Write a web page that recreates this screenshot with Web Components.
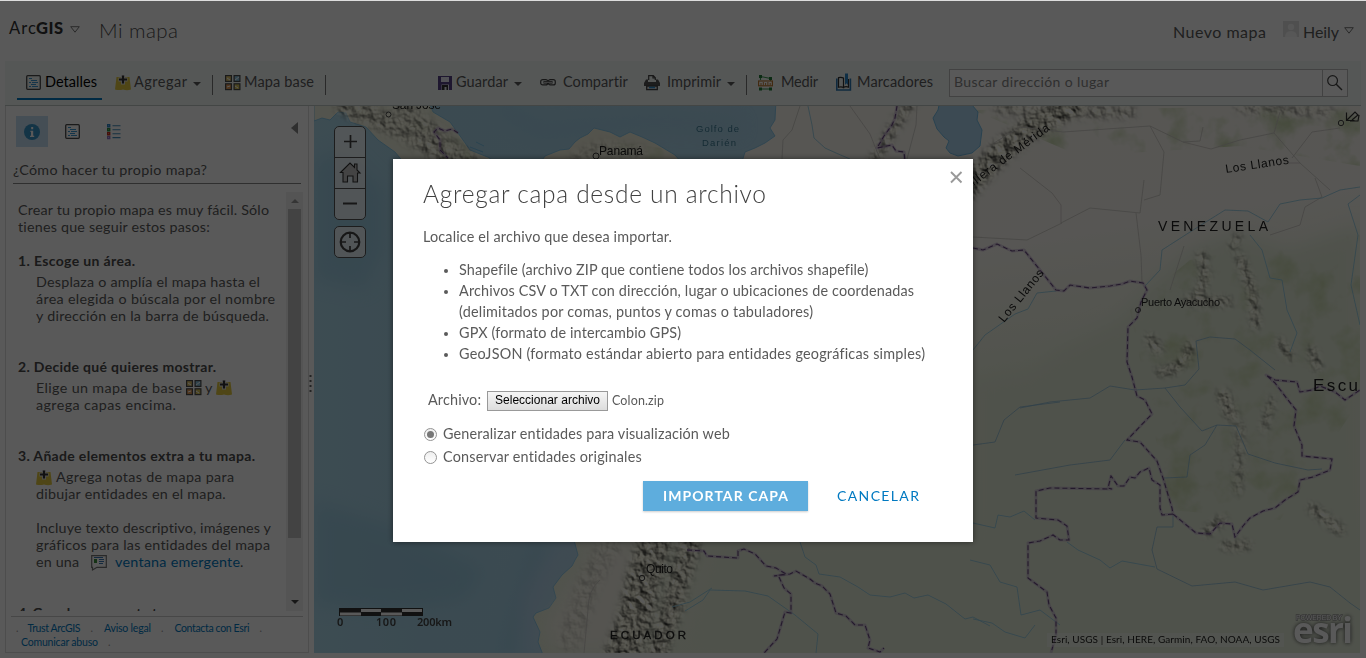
<!DOCTYPE html>
<html lang="es">
<head>
<meta charset="utf-8">
<title>Mi mapa</title>
<style>
html,body{margin:0;height:100%;overflow:hidden;background:#fff}
body{font-family:Lato,"Open Sans",sans-serif;font-size:14px;color:#5a5a5a}
</style>
</head>
<body>
<map-app></map-app>
<script>
const define=(name,css,html,after)=>{
  const tpl=document.createElement('template');
  tpl.innerHTML=`<style>${css}</style>${html}`;
  customElements.define(name,class extends HTMLElement{
    connectedCallback(){
      if(this.shadowRoot)return;
      this.attachShadow({mode:'open'}).append(tpl.content.cloneNode(true));
      if(after)after(this,this.shadowRoot);
    }
  });
};

/* One line of text tracked out to the width given in its w attribute */
define('fit-text',`:host{display:inline-block;white-space:nowrap}span{display:inline-block}`,
`<span><slot></slot></span>`,(el,root)=>{
  const s=root.querySelector('span'),w=+el.getAttribute('w');
  const n=el.textContent.length;
  const natural=s.getBoundingClientRect().width;
  if(n>1)s.style.letterSpacing=((w-natural)/(n-1)).toFixed(3)+'px';
  el.style.width=w+'px';
});

const ICONS={
details:`<rect x=".7" y=".7" width="13.6" height="13.6" rx="1" fill="none" stroke="#4c4c4c" stroke-width="1.3"/><path d="M3 3.5h3M5 5.5h6M3 7.5h2M6 7.5h6M5 9.5h5M3 11.5h2M6 11.5h6" stroke="#3b98d4" stroke-width="1.1"/>`,
add:`<path d="M1.500 2h13L16 14.500q-4 1.300-8 0-4 1.200-8 0z" fill="#e3c93f"/><path d="M8 0v9.500M3.500 4.500h9" stroke="#e9e9e9" stroke-width="4"/><path d="M8 .5v8M4 4.500h8" stroke="#333" stroke-width="2.200"/>`,
basemap:`<g stroke="#4c4c4c" stroke-width="1.2"><rect x=".6" y=".6" width="5.8" height="5.8" fill="#e1c56c"/><rect x="9.1" y=".6" width="5.8" height="5.8" fill="#8bc5df"/><rect x=".6" y="8.8" width="5.8" height="5.8" fill="#e69a55"/><rect x="9.1" y="8.8" width="5.8" height="5.8" fill="#d8c25b"/></g><path d="M10 5l4-3M2 12l3-1M2 3l3 2M10 11l3 2" stroke="#fff" stroke-width="1"/>`,
save:`<path d="M0 1h14v14H0z" fill="#564287"/><path d="M3 2h8v5H3zM3.500 9.500h7.500V15H3.500z" fill="#e9e9f3"/><path d="M4 10h6v5H8.500v-3h-2v3H4z" fill="#333"/>`,
link:`<g fill="none" stroke="#444" stroke-width="1.2"><rect x=".7" y="4.700" width="7" height="5.200" rx="2"/><rect x="8.300" y="4.700" width="7" height="5.200" rx="2"/><path d="M3.500 7.300h9" stroke-width="2.600"/><path d="M4 7.300h8" stroke="#ddd" stroke-width=".9"/></g>`,
print:`<path d="M4.700 5V.7h4.600l2 2V5M9 .7V3h2.300" fill="none" stroke="#444" stroke-width="1.2"/><path d="M2 4.500h2V7h8V4.500h2L16 8v3H0V8z" fill="#555"/><path d="M2.700 11v3.700h10.600V11z" fill="#ddd" stroke="#444" stroke-width="1.300"/><path d="M5 12.500h6" stroke="#2f8fd0" stroke-width="1.600"/>`,
measure:`<path d="M2.500 1.500l10 2M2.500 14h10M2.500 2v3M12.500 3v3" stroke="#3c9a52" stroke-width="1.1"/><rect x=".6" y="6" width="13.8" height="4.8" fill="#fff" stroke="#bd7a32" stroke-width="1.2"/><path d="M3 8v2.500M5.300 7v3.500M7.600 8v2.500M9.900 7v3.500M12.200 8v2.500" stroke="#bd7a32"/><path d="M1 0h3v3H1zM11 2h3v3h-3zM1 12.500h3v3H1zM11 12.500h3v3h-3z" fill="#247c3b"/>`,
bookmark:`<path d="M.8 3.500V15h13.600V3.500" fill="none" stroke="#2d78b4" stroke-width="1.600"/><path d="M2.500 2.600q3-.8 5 .5v9.400q-2-1.200-5-.3zM7.500 3v9.400q2-1.200 5-.3V4" fill="none" stroke="#333" stroke-width="1.200"/><path d="M9 -1.500h3v11.500l-1.500-1.700L9 10z" fill="#2d86c8"/>`,
info:`<circle cx="8" cy="8" r="8" fill="#3795c8"/><path d="M6.400 6.700h2.800v5h1v1.200H6V11.700h1V8h-.6zM7.200 3h2v2.200h-2z" fill="#fff"/>`,
legend:`<g fill="none" stroke-width="1.400"><path d="M.7.7h2v2h-2z" stroke="#2d86c8"/><path d="M.7 4.700h2v2h-2z" stroke="#2e8c46"/><path d="M.7 8.700h2v2h-2z" stroke="#c83020"/><path d="M.7 12.600h2v2h-2z" stroke="#9072c2"/></g><path d="M5.500 1.700h8M5.500 5.700h8M5.500 9.700h8M5.500 13.600h8" stroke="#438cba" stroke-width="1.100"/>`,
popup:`<path d="M.7.7h14.600v11.600H6L1.500 15v-2.700H.7z" fill="#fff" stroke="#777" stroke-width="1.200"/><path d="M3 4h3v4H3z" fill="#3c8f3c"/><path d="M8 4.500h5M8 6.500h5M8 8.500h4M3 2.500h9" stroke="#3d78b4"/>`,
search:`<circle cx="5.600" cy="5.600" r="4.900" fill="none" stroke="#444" stroke-width="1.200"/><path d="M9 9l6 6" stroke="#444" stroke-width="1.400"/>`,
open:`<path d="M.7.7h8.600L5 6.200z" fill="none" stroke="#777" stroke-width="1"/>`,
caret:`<path d="M0 0h8L4 4z" fill="#5a5a5a"/>`,
user:`<path d="M0 0h16v16H0z" fill="#e2e2e2"/><circle cx="8" cy="6" r="3.200" fill="#f8f8f8"/><path d="M2 16q0-6 6-6t6 6z" fill="#f8f8f8"/>`,
close:`<path d="M1 1l10.500 10.500M11.500 1L1 11.500" stroke="#999" stroke-width="1.900"/>`,
plus:`<path d="M7.500 1v13M1 7.500h13" stroke="#444" stroke-width="1.700"/>`,
minus:`<path d="M1 7.500h14" stroke="#444" stroke-width="2"/>`,
home:`<path d="M1.500 10.500L11 1l4.500 4.500V2H18v6l3 3h-2.500v9H14v-6H8.500v6H4v-9.500z" fill="#c4c4c4" stroke="#333" stroke-width="1.100"/>`,
locate:`<circle cx="11" cy="11" r="9.300" fill="none" stroke="#444" stroke-width="2.200"/><path d="M11 1v6M11 15v6M1 11h6M15 11h6" stroke="#444" stroke-width="1.700"/>`
};
define('ui-icon',`:host{display:block;flex:none}svg{display:block;overflow:visible}`,`<svg></svg>`,(el,root)=>{
  const s=root.querySelector('svg');
  s.setAttribute('width',el.getAttribute('w')||16);
  s.setAttribute('height',el.getAttribute('h')||16);
  s.innerHTML=ICONS[el.getAttribute('name')];
});

define('app-header',`
:host{display:flex;height:61px;border-top:1px solid #ddd;box-sizing:border-box;padding:0 13px 0 9px;line-height:20px;align-items:flex-start}
.brand{display:flex;font-size:16.500px;color:#333;margin-top:17px;width:54px}
.brand b{font-weight:900}
.title{font-size:20.500px;font-weight:300;margin:19px auto 0 19px;color:#4c4c4c}
.r{font-size:16px;margin-top:21px}`,
`<div class="brand"><fit-text w="27">Arc</fit-text><b><fit-text w="27">GIS</fit-text></b></div><ui-icon name="open" w="10" h="8" style="margin:25px 0 0 7px"></ui-icon>
<div class="title"><fit-text w="79">Mi mapa</fit-text></div>
<fit-text class="r" w="93">Nuevo mapa</fit-text><ui-icon name="user" style="margin:20px 4px 0 17px"></ui-icon>
<fit-text class="r" w="36">Heily</fit-text><ui-icon name="open" w="9" h="8" style="margin:26px 0 0 5px"></ui-icon>`);

define('tool-item',`:host{display:flex;align-items:flex-start;line-height:20px;box-sizing:border-box;height:39px;font-size:14.500px;margin-top:11px}
:host([active]){border-bottom:2px solid #0079c1;padding:0 5px 0 9px;color:#000;height:28px}
ui-icon{margin-top:3px;margin-right:var(--g,3px)}
ui-icon.c{margin:10px 0 0 6px}`,``,(el,root)=>{
  root.innerHTML+=`<ui-icon name="${el.getAttribute('icon')}"></ui-icon><fit-text w="${el.getAttribute('w')}">${el.getAttribute('label')}</fit-text>`+(el.hasAttribute('menu')?`<ui-icon class="c" name="caret" w="8" h="4"></ui-icon>`:'');
});

define('map-toolbar',`
:host{display:flex;margin:0 5px;height:45px;box-sizing:border-box;background:#f3f9f7;border-bottom:1px solid #c0c8c6;padding-left:12px;align-items:flex-start}
i{width:1px;height:20px;background:#777;margin-top:14px}
.search{display:flex;box-sizing:border-box;height:28px;width:399px;border:1px solid #bcbcbc;background:#fff;margin-top:8px;line-height:24px;font-size:14px;color:#888}
.search span{flex:1;padding-left:4px}
.search div{width:25px;border-left:1px solid #bcbcbc;padding:5px 0 0 4px;box-sizing:border-box}`,
`<tool-item active icon="details" w="52" label="Detalles" style="width:85px;flex:none"></tool-item>
<tool-item icon="add" w="53" label="Agregar" menu style="margin-left:13px"></tool-item>
<i style="margin-left:11px"></i>
<tool-item icon="basemap" w="70" label="Mapa base" style="margin-left:12px"></tool-item>
<i style="margin-left:11px"></i>
<tool-item icon="save" w="52" label="Guardar" menu style="margin-left:112px;--g:2px"></tool-item>
<tool-item icon="link" w="65" label="Compartir" style="margin-left:18px;--g:7px"></tool-item>
<tool-item icon="print" w="54" label="Imprimir" menu style="margin-left:16px;--g:7px"></tool-item>
<i style="margin-left:11px"></i>
<tool-item icon="measure" w="37" label="Medir" style="margin-left:11px;--g:7px"></tool-item>
<tool-item icon="bookmark" w="76" label="Marcadores" style="margin-left:18px;--g:5px"></tool-item>
<div class="search" style="margin-left:16px"><span><fit-text w="155">Buscar dirección o lugar</fit-text></span><div><ui-icon name="search"></ui-icon></div></div>`);

define('help-steps',`
:host{display:block;box-sizing:border-box;padding:9px 0 0 7px;line-height:17px;font-size:14.300px;width:275px}
p{margin:0 0 17px}p fit-text,.s fit-text.l{display:block}
b{display:block;margin-bottom:4px;height:17px;color:#4c4c4c;font-size:14px}
.s{padding-left:18px;margin-bottom:34px}
.row{display:flex;height:17px;align-items:flex-start}
a{color:#0079c1}`,
`<p><fit-text w="251">Crear tu propio mapa es muy fácil. Sólo</fit-text><fit-text w="192">tienes que seguir estos pasos:</fit-text></p>
<b><fit-text w="117">1. Escoge un área.</fit-text></b>
<div class="s"><fit-text class="l" w="224">Desplaza o amplía el mapa hasta el</fit-text><fit-text class="l" w="239">área elegida o búscala por el nombre</fit-text><fit-text class="l" w="233">y dirección en la barra de búsqueda.</fit-text></div>
<b><fit-text w="198">2. Decide qué quieres mostrar.</fit-text></b>
<div class="s"><div class="row"><fit-text w="146">Elige un mapa de base</fit-text><ui-icon name="basemap" style="margin:1px 3px 0 4px"></ui-icon><fit-text w="7">y</fit-text><ui-icon name="add" style="margin:1px 0 0 4px"></ui-icon></div><fit-text class="l" w="140">agrega capas encima.</fit-text></div>
<b><fit-text w="237">3. Añade elementos extra a tu mapa.</fit-text></b>
<div class="s"><div class="row"><ui-icon name="add" style="margin:2px 4px 0 0"></ui-icon><fit-text w="178">Agrega notas de mapa para</fit-text></div><fit-text class="l" w="190">dibujar entidades en el mapa.</fit-text>
<fit-text class="l" w="235" style="margin-top:17px">Incluye texto descriptivo, imágenes y</fit-text><fit-text class="l" w="234">gráficos para las entidades del mapa</fit-text>
<div class="row"><fit-text w="43">en una</fit-text><ui-icon name="popup" style="margin:2px 8px 0 12px"></ui-icon><a><fit-text w="125">ventana emergente</fit-text></a>.</div></div>
<b><fit-text w="187">4. Guarda y comparte tu mapa.</fit-text></b>`);

define('side-panel',`
:host{display:block;box-sizing:border-box;width:304px;height:547px;border:solid #ddd;border-width:0 1px 1px;padding:10px 5px 0}
nav{display:flex;height:32px;padding-left:5px;align-items:flex-start}
nav div{background:#c5dff3;width:32px;height:31px;box-sizing:border-box;padding:8px}
h2{font:inherit;font-size:14.300px;line-height:18px;margin:13px 2px 0 2px;height:22px;border-bottom:1px solid #888}
.scroll{display:flex;height:419px;margin-top:8px;overflow:hidden}
help-steps{height:410px;flex:none}
.bar{width:17px;background:#f1f1f1;display:flex;flex-direction:column;align-items:center;flex:none}
.bar div{width:13px;height:329px;background:#c1c1c1;margin-top:6px;margin-bottom:62px;flex:none}
footer{border-top:1px solid #ccc;margin-top:5px;padding:4px 0 0 6px;font-size:10.500px;line-height:14px;color:#0079c1}
footer div{display:flex;gap:10px}u{text-decoration:none;color:#999}u:first-child{margin:0 -1px}fit-text+u{margin-right:1px}`,
`<nav><div><ui-icon name="info"></ui-icon></div><ui-icon name="details" w="15" h="15" style="margin:8px 0 0 17px"></ui-icon><ui-icon name="legend" style="margin:8px 0 0 27px"></ui-icon>
<svg width="7" height="12" style="margin:6px 0 0 168px"><path d="M7 0v12L0 6z" fill="#888"/></svg></nav>
<h2><fit-text w="194">¿Cómo hacer tu propio mapa?</fit-text></h2>
<div class="scroll"><help-steps></help-steps><div class="bar"><svg width="8" height="4" style="margin-top:7px;flex:none"><path d="M0 4h8L4 0z" fill="#999"/></svg><div></div><svg width="8" height="4" style="flex:none"><path d="M0 0h8L4 4z" fill="#444"/></svg></div></div>
<footer><div><u>.</u><fit-text w="53">Trust ArcGIS</fit-text><u>.</u><fit-text w="47">Aviso legal</fit-text><u>.</u><fit-text w="75">Contacta con Esri</fit-text><u>.</u></div><div style="padding-left:4px"><fit-text w="77">Comunicar abuso</fit-text><u>.</u></div></footer>`);

/* Topographic base map; the viewBox is in window coordinates */
const mountains=[
 ['M346 106L372 116 400 128 428 145 450 160',20,.7],['M400 106L440 138 475 168',16,.6],['M575 158L600 146 640 152',10,.4],
 ['M912 100L895 125 872 165',10,.8],['M1072 106L1030 128 1000 152 965 190',22,1],['M1000 108L1050 112 1130 112',12,.6],['M1240 108L1330 112',9,.6],
 ['M655 540L645 575 635 620 620 660',34,1],['M690 540L682 570 672 605 655 660',22,.9],['M610 545L590 580 570 640',22,.25],
 ['M1238 235L1233 248',6,.8],['M1202 255L1205 280 1198 295',8,.9],['M1240 258L1252 290 1256 325',8,.9],['M1188 300L1228 302',9,.8],['M1150 338L1158 350M1190 345Q1185 370 1160 372',9,.8],
 ['M1280 342L1290 357M1312 350L1317 367',8,.8],['M1223 395L1232 416',11,.9],['M1272 400L1264 428',7,.7],['M1240 425L1238 490',9,.5],['M1312 508L1340 530',9,.8],['M1206 532L1222 520M1225 546L1247 545',8,.9]
];
define('base-map',`:host{display:block;width:1046px;height:547px}svg{display:block}text{font-family:"Liberation Sans",Arial,sans-serif;fill:#222}`,
`<svg width="1046" height="547" viewBox="314 106 1046 547">
<defs>
<linearGradient id="land" x1="0" y1="0" x2=".25" y2="1"><stop offset="0" stop-color="#f8f6ed"/><stop offset=".38" stop-color="#f8f6ef"/><stop offset=".6" stop-color="#e9efdc"/><stop offset="1" stop-color="#e3ebd8"/></linearGradient>
<linearGradient id="sea" x1="0" y1="0" x2="1" y2="0"><stop offset="0" stop-color="#aedaec"/><stop offset=".1" stop-color="#a9d5e8"/><stop offset="1" stop-color="#b7d8ef"/></linearGradient>
<filter id="soft" x="-20%" y="-20%" width="140%" height="140%"><feGaussianBlur stdDeviation="9"/></filter>
<filter id="relief" filterUnits="userSpaceOnUse" x="314" y="96" width="1056" height="567" color-interpolation-filters="sRGB">
<feGaussianBlur in="SourceGraphic" stdDeviation="3.500" result="m"/>
<feTurbulence type="fractalNoise" baseFrequency=".12" numOctaves="3" seed="8"/>
<feDiffuseLighting surfaceScale="3.200" diffuseConstant="1.220" lighting-color="#e4e2d0"><feDistantLight azimuth="315" elevation="50"/></feDiffuseLighting>
<feComposite in2="m" operator="in"/></filter>
<filter id="wash" filterUnits="userSpaceOnUse" x="314" y="96" width="1056" height="567" color-interpolation-filters="sRGB">
<feTurbulence type="fractalNoise" baseFrequency=".03" numOctaves="4" seed="4"/>
<feColorMatrix values="0 0 0 0 .8  0 0 0 0 .85  0 0 0 0 .7  3 0 0 0 -1.500" result="n"/><feComposite in="n" in2="SourceAlpha" operator="in"/></filter>
</defs>
<path d="M314 106h1046v547H314z" fill="url(#sea)"/>
<g filter="url(#soft)" opacity=".5"><path d="M314 160l30-10 40 40v60l-20 40-50-10zM314 500l90 30 80 40-20 30-80 10-70-5z" fill="#91c3dc"/><path d="M540 540l-20 60-15 60" stroke="#86bcd8" stroke-width="8" fill="none"/><path d="M575 540l-42 60 3 60" stroke="#c9d7f2" stroke-width="17" fill="none"/><path d="M500 106l40 25 110-10 90 5" stroke="#98c8e3" stroke-width="12" fill="none"/></g>
<g stroke="#78bfe6" stroke-width=".8">
<path d="M314 100H428L433 112 450 122 463 140 470 150 490 158V170H410L395 152 378 140 366 127 350 122 346 113 338 112 330 120 322 118 314 121z" fill="#eef0de"/>
<path d="M535 170L545 156 560 150 569 149 575 142 580 138 588 134 594 128 610 132 620 137 630 132 642 137 655 143 675 155 688 170z" fill="#eeedda"/>
<path d="M776 100L775 120 770 128 775 136 765 143 755 148 745 152 738 175H760V540H574L578 555 575 560 572 566 562 575 553 587 556 598 549 608 536 613 533 617 540 632 538 642 545 660H1370V100z" fill="url(#land)"/></g>
<path d="M560 653L550 640 548 620 563 600 566 590 584 570 590 542H640L615 653z" fill="#f6f1e8" filter="url(#soft)" opacity=".8"/>
<path d="M973 380L1030 372 1060 350 1120 320 1145 290 1190 250 1235 232 1290 250 1360 225V653H690L710 540H973z" fill="#e3ebd8" filter="url(#soft)"/>
<path d="M428 106l35 36 10 18h-45l-45-25zM576 158l25-18 60 8 10 12zM973 110l387-4v60l-120-20-160 10zM1130 310l60-50 80-15 90-10v165l-80 120-110-10z" fill="#cfd8b3" filter="url(#wash)"/>
<g id="mountains" filter="url(#relief)" fill="none" stroke="#000" stroke-linecap="round" stroke-linejoin="round"></g>
<path d="M940 100L938 110 933 118 937 129 944 137 949 141 946 148 950 153 958 156 972 153 980 146 982 130 977 120 978 112 972 105 972 100z" fill="#abd4ee" stroke="#75bce4"/>
<path d="M470 147l13 5M476 142l8 4" stroke="#78bfe6"/>
<g fill="none" stroke="#c9c7c2" stroke-width=".8"><path d="M850 106L870 134 880 159M800 106L792 130 783 140 782 159M917 106L916 125 907 159M994 143L1020 127 1063 132 1150 126 1164 152 1160 195 1144 200M1020 168L1052 193 1061 205 1061 223 1090 208 1140 213 1144 180M973 237L1027 240 1062 223M1150 126L1183 142 1200 141 1203 127M1183 142L1211 149 1240 140 1274 133 1300 163 1330 190M1274 133L1280 112M1312 132L1340 128M1300 163L1288 163M1312 132L1292 158M1315 178L1322 197 1305 207 1300 225 1270 235M1136 213L1141 255 1142 282M1170 290L1184 246M600 580q-12 10-12 30l-4 43"/></g>
<g fill="none" stroke="#8cc6df" stroke-width=".8"><path d="M808 106L812 125 814 138 825 148 836 153 850 159M973 350L985 335 1015 314 1028 309 1037 293 1056 291M1145 286L1160 270 1162 250 1190 232 1225 210 1248 211 1268 222 1280 204 1300 200 1322 198 1340 190 1360 187M1250 235L1262 250 1270 278 1282 280 1287 310 1297 333 1290 352M1360 195L1348 204 1358 235 1351 285 1360 325"/>
<path d="M1020 408L1050 402 1090 398 1110 386 1135 390 1165 388 1185 385 1199 369 1196 341 1210 337 1235 339 1250 350 1275 370M973 445L995 442 1004 420 1020 407 1060 402M1015 475L1070 465 1110 460 1125 440M1165 388L1180 407 1202 431 1217 425 1236 426 1248 454 1275 463 1308 470 1322 469M1217 425L1205 445 1190 455 1187 477 1164 478M1173 514V527L1157 527 1152 550 1157 569 1192 586 1235 582 1263 590 1310 582 1330 587 1350 603 1360 610" stroke="#8db9d2"/>
<path d="M800 542L805 557 816 565 819 574 840 577 858 587 870 595 890 597 905 593 914 598 928 595 946 604 965 619 973 617 990 626M685 611L703 600 710 590 745 591 768 596 795 615 818 634 816 653M973 523L995 528 998 515 1010 517 1024 511 1035 520M970 560L990 565 1000 582 1017 587 1021 615 1040 610 1060 625M973 619L992 623 1005 632 1025 638 1035 625M1067 542L1078 550 1100 560 1110 568 1122 561 1155 567M672 607L690 602 712 588"/></g>
<g fill="none" stroke-linejoin="round" stroke="#b89fca" stroke-width="3" opacity=".5">
<path id="b1" d="M458 133L452 129 445 131 438 128 434 132 440 140 440 150 448 158M897 106L895 118 892 125 884 136 877 148 892 145 896 151 904 152 905 161M973 248L983 250 997 244 1012 251 1024 250 1040 270 1056 290 1064 291 1070 285 1090 288 1110 286 1122 284 1130 281 1143 283 1147 290 1141 302 1137 318 1128 327 1127 362 1132 377 1137 396 1145 400 1152 414 1127 440 1140 442 1157 461 1163 478 1172 508 1173 514 1196 533 1210 534 1220 523 1232 524 1235 537 1243 526 1250 518 1263 511 1275 508 1285 500 1298 492 1300 480 1313 477 1330 470 1332 459 1302 456 1302 445 1294 426 1296 410 1288 400 1275 383 1266 375 1275 380 1297 382 1300 392 1312 390 1320 386 1335 392 1345 400 1360 390M1173 514L1162 515 1160 508 1160 485 1152 480 1149 468 1140 472 1135 478 1130 477 1124 486 1118 486 1111 476 1108 488 1112 489 1050 488 1036 491 1036 518 1058 520 1067 526 1069 540 1060 540 1053 535 1040 541 1028 543 1028 578 1047 592 1049 605 1056 618 1056 635 1051 653"/>
<path id="b2" d="M687 550L704 551 707 556 738 558 738 551 744 549 755 554 766 566 776 568 786 574 774 576 790 574 796 571 810 579 815 583 822 586 830 594 836 613 846 616 855 625 865 625 870 640 868 648 880 652 884 648M779 577L784 588 791 594 791 613 785 612 777 639 764 653"/></g>
<g id="dashes" fill="none" stroke="#66487c" stroke-width="1.100" stroke-dasharray="5 3"></g>
<g fill="none" stroke="#444"><circle cx="388.500" cy="114.500" r="2.500"/><circle cx="596" cy="156" r="3"/><circle cx="1138" cy="310" r="2.500"/><circle cx="642" cy="578" r="2.700"/><circle cx="1341" cy="123" r="2.700"/></g>
<g font-size="12"><text x="392" y="109" textLength="49">San José</text><text x="599" y="154.500" textLength="44">Panamá</text><text x="1141" y="306" font-size="11" textLength="79">Puerto Ayacucho</text><text x="646" y="573" textLength="27">Quito</text>
<g font-size="9.500"><text x="696" y="132" textLength="43" style="fill:#3d7b94">Golfo de</text><text x="702" y="145.500" textLength="34" style="fill:#3d7b94">Darién</text></g>
<text x="1158" y="231" font-size="14" textLength="110">VENEZUELA</text><text x="610" y="639" font-size="11.500" textLength="76" style="stroke:#222;stroke-width:.3">ECUADOR</text><text x="1313" y="391" font-size="17" textLength="45">Escu</text>
<text transform="translate(1226 173) rotate(-8.500)" textLength="64">Los Llanos</text><text transform="translate(1004 323) rotate(-51)" textLength="64">Los Llanos</text><text transform="translate(974 186) rotate(-36.500)" textLength="95">illera de Mérida</text></g>
<path d="M1346.500 112.500v8h8M1347 120l8-8 3 3-6 5M1350 121h8l1-6" fill="none" stroke="#333" stroke-width="1.200"/>
<path d="M339 608h84v8h-84z" fill="#333"/><path d="M361 609h20v3h-20zM402 609h20v3h-20zM340 612.500h21v3h-21zM381 612.500h21v3h-21z" fill="#fff"/>
<g font-weight="600" style="font-size:11px"><text x="337" y="626" style="font-family:'Noto Sans',sans-serif;fill:#444">0</text><text x="376" y="626" textLength="20" style="font-family:'Noto Sans',sans-serif;fill:#444">100</text><text x="417" y="626" textLength="35" style="font-family:'Noto Sans',sans-serif;fill:#444">200km</text></g>
<path d="M1047 633h237v14h-237z" fill="#fff" opacity=".3"/>
<text x="1051" y="643" textLength="229" style="font-family:Lato,sans-serif;font-size:10px">Esri, USGS | Esri, HERE, Garmin, FAO, NOAA, USGS</text>
<text x="1293" y="643" textLength="60" style="font-family:'Open Sans',sans-serif;font-weight:700;font-size:35px;fill:#fff;filter:drop-shadow(0 0 2px #444)">esri</text>
<text x="1296" y="620" textLength="46" style="font-size:7px;fill:#fff;stroke:#999;stroke-width:1.600px;paint-order:stroke">POWERED BY</text>
</svg>`,(el,root)=>{
  const NS='http://www.w3.org/2000/svg',g=root.querySelector('#mountains');
  for(const [d,w,o] of mountains){const p=document.createElementNS(NS,'path');p.setAttribute('d',d);p.setAttribute('stroke-width',w);p.setAttribute('opacity',o);g.append(p)}
  root.querySelector('#dashes').append(...['#b1','#b2'].map(id=>{const c=root.querySelector(id).cloneNode();c.removeAttribute('id');return c}));
});

define('map-controls',`:host{display:block;width:32px}
div{border:1.500px solid #555;border-radius:5px;background:#ffffffc0;box-sizing:border-box;overflow:hidden}
span{display:flex;height:30px;align-items:center;justify-content:center}
span+span{border-top:1px solid #555}
div:first-of-type ui-icon{margin-top:-2px}
.loc{margin-top:6px;height:32px}`,
`<div><span><ui-icon name="plus" w="15" h="15"></ui-icon></span><span><ui-icon name="home" w="22" h="21"></ui-icon></span><span><ui-icon name="minus" w="16" h="15"></ui-icon></span></div><div class="loc"><span><ui-icon name="locate" w="22" h="22"></ui-icon></span></div>`);

define('radio-row',`:host{display:flex;align-items:center;height:23px;gap:6px}
i{width:13px;height:13px;box-sizing:border-box;border:1px solid #949494;border-radius:50%;background:linear-gradient(#eee,#fff);display:flex;align-items:center;justify-content:center;margin-top:2px}
:host([checked]) i::after{content:"";width:7px;height:7px;border-radius:50%;background:#777}`,`<i></i><slot></slot>`);

define('import-dialog',`
:host{display:block;box-sizing:border-box;width:580px;height:383px;background:#fff;padding:17px 11px 0 30px;font-size:14.400px;line-height:21px;color:#5a5a5a;box-shadow:0 0 6px rgba(0,0,0,.5)}
header{display:flex;justify-content:space-between;align-items:flex-start;height:50px}
h1{margin:0;font-size:24.500px;line-height:36px;font-weight:300;color:#404040}
p{margin:0}
ul{margin:12px 0 0;padding-left:36px}li fit-text{display:block}li{height:21px}li.two{height:42px}
li::marker{font-size:13px}
.file{display:flex;margin:24px 0 0 5px;height:22px;align-items:center}
button{font:12px/17px "Liberation Sans",Arial,sans-serif;width:121px;height:20px;padding:0;margin:3px 4px 0 6px;border:1px solid #999;border-radius:0;background:linear-gradient(#f5f5f5,#ddd);color:#000}
.small{font-size:12.500px;margin-top:3px}
.radios{padding:12px 0 0 1px}
.actions{display:flex;margin:13px 0 0 220px;line-height:30px;font-size:14px}
.go{width:165px;height:30px;background:#5eaddd;color:#fff;text-align:center;font-weight:700;margin-right:29px;box-shadow:0 1px 2px #ccc}
.no{color:#0079c1}`,
`<header><h1><fit-text w="343">Agregar capa desde un archivo</fit-text></h1><ui-icon name="close" w="12" h="12" style="margin-top:-5px"></ui-icon></header>
<p><fit-text w="249">Localice el archivo que desea importar.</fit-text></p>
<ul><li><fit-text w="409">Shapefile (archivo ZIP que contiene todos los archivos shapefile)</fit-text></li>
<li class="two"><fit-text w="455">Archivos CSV o TXT con dirección, lugar o ubicaciones de coordenadas</fit-text><fit-text w="354">(delimitados por comas, puntos y comas o tabuladores)</fit-text></li>
<li><fit-text w="222">GPX (formato de intercambio GPS)</fit-text></li>
<li><fit-text w="466">GeoJSON (formato estándar abierto para entidades geográficas simples)</fit-text></li></ul>
<div class="file"><fit-text w="53">Archivo:</fit-text><button><fit-text w="105">Seleccionar archivo</fit-text></button><fit-text class="small" w="52">Colon.zip</fit-text></div>
<div class="radios"><radio-row checked><fit-text w="287">Generalizar entidades para visualización web</fit-text></radio-row><radio-row><fit-text w="199">Conservar entidades originales</fit-text></radio-row></div>
<div class="actions"><div class="go"><fit-text w="125">IMPORTAR CAPA</fit-text></div><div class="no"><fit-text w="82">CANCELAR</fit-text></div></div>`);

define('map-app',`
:host{display:block;height:100vh;overflow:hidden;position:relative}
main{display:flex;height:547px;padding:0 5px}
.split{width:5px;display:flex;align-items:center;font-size:0}
.map{position:relative;width:1046px}
map-controls{position:absolute;left:20px;top:20px}
.veil{position:absolute;inset:1px 0 0;background:rgba(0,0,0,.65)}
.modal{position:absolute;inset:159px 393px auto;display:flex}`,
`<app-header></app-header><map-toolbar></map-toolbar>
<main><side-panel></side-panel><div class="split"><svg width="3" height="20" style="margin-top:7px"><path d="M1.500 2v18" stroke="#666" stroke-width="2" stroke-dasharray="2 3"/></svg></div><div class="map"><base-map></base-map><map-controls></map-controls></div></main>
<div class="veil"></div><div class="modal"><import-dialog></import-dialog></div>`);
</script>
</body>
</html>
